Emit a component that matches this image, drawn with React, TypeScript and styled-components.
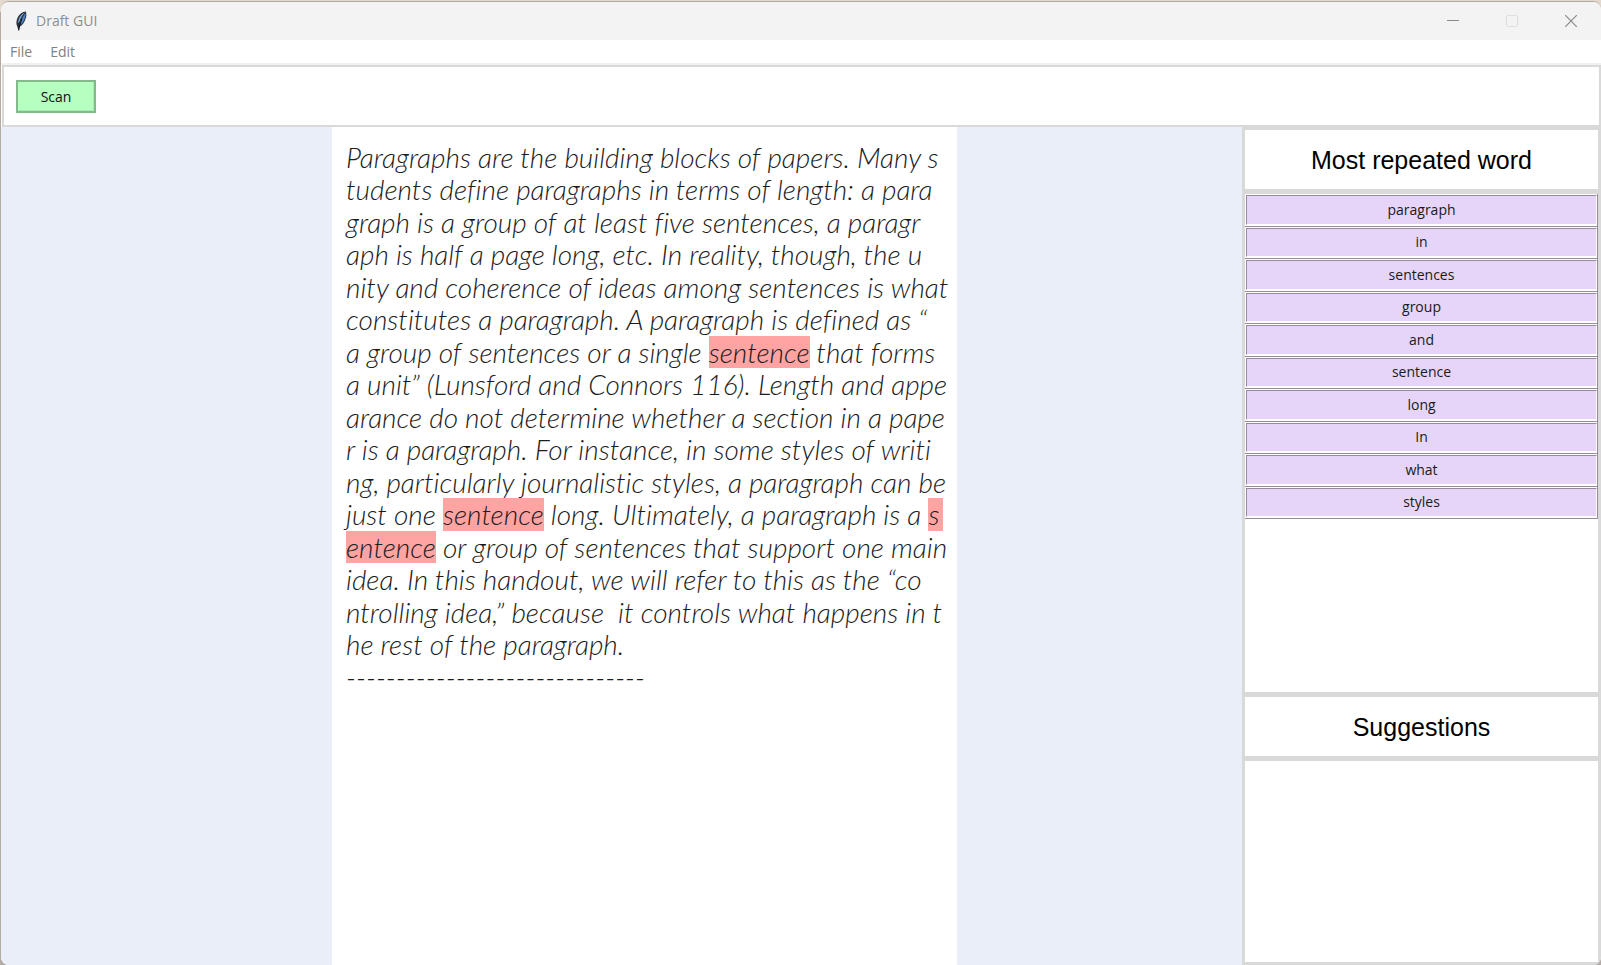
import React from "react";
import styled, { createGlobalStyle } from "styled-components";

const GlobalStyle = createGlobalStyle`
  *, *::before, *::after { box-sizing: border-box; }
  body {
    margin: 0;
    background: #b5aba5;
    font-family: "Segoe UI", "Open Sans", "Noto Sans", sans-serif;
  }
  button { font-family: inherit; cursor: pointer; }
`;

const Desktop = styled.div`
  min-height: 100vh;
  display: flex;
  padding: 1px 0 0 1px;
  background: linear-gradient(#e3d9ce 12px, #b5aba5 12px);
`;

const AppWindow = styled.div`
  flex: 1;
  display: flex;
  flex-direction: column;
  overflow: hidden;
  border-top: 1px solid #b0a9a2;
  border-radius: 8px;
  background: #ffffff;
`;

const TitleBar = styled.header`
  flex: none;
  height: 38px;
  display: flex;
  align-items: center;
  padding: 0 1px 0 13px;
  background: #f3f3f3;
`;

const Title = styled.h1`
  flex: 1;
  margin: 0 0 0 8px;
  font-size: 14px;
  font-weight: 400;
  line-height: 20px;
  color: #8e8e8e;
`;

const WindowButton = styled.button`
  width: 59px;
  height: 38px;
  display: flex;
  align-items: center;
  justify-content: center;
  padding: 0;
  border: 0;
  background: transparent;
  color: #8a8a8a;
  &:disabled { color: #dedede; cursor: default; }
`;

const MenuBar = styled.nav`
  flex: none;
  height: 25px;
  display: flex;
  gap: 2px;
  padding: 0 1px;
  border-bottom: 2px solid #f0f0f0;
`;

const MenuButton = styled.button`
  padding: 0 8px;
  border: 0;
  background: transparent;
  font-size: 14px;
  line-height: 24px;
  color: #808080;
`;

const Toolbar = styled.div`
  flex: none;
  height: 62px;
  margin-left: 1px;
  padding: 13px 12px;
  border: 2px solid #d9d9d9;
`;

const ScanButton = styled.button`
  display: block;
  width: 80px;
  height: 33px;
  padding: 0;
  border: 2px solid #84b98c;
  box-shadow: inset -1px -1px #a6ecb0;
  background: #b5ffc0;
  font-size: 14px;
  line-height: 20px;
  color: #111111;
`;

const Main = styled.main`
  flex: 1;
  display: flex;
`;

const Workspace = styled.section`
  flex: 1;
  display: grid;
  grid-template-columns: 331fr 625px 285fr;
  background: #eaeef8;
`;

const Paper = styled.article`
  grid-column: 2;
  padding: 14px;
  background: #ffffff;
  font-family: "Ink Free", Lato, sans-serif;
  font-size: 28px;
  font-weight: 300;
  font-style: italic;
  font-variant-ligatures: none;
  line-height: 1.16;
  color: #1c1c1c;
`;

const Line = styled.div`
  display: flex;
  white-space: pre;
`;

const Highlight = styled.mark<{ $fill?: boolean }>`
  flex: ${(p) => (p.$fill ? "1" : "none")};
  background: #ffa3a3;
  color: inherit;
`;

const Sidebar = styled.aside`
  width: 359px;
  display: flex;
  flex-direction: column;
  border: solid #d9d9d9;
  border-width: 0 3px 3px;
`;

const PanelHeading = styled.h2`
  flex: none;
  height: 65px;
  margin: 0;
  padding-top: 1px;
  border: solid #d9d9d9;
  border-width: 3px 0;
  font-family: "Liberation Sans", Arial, sans-serif;
  font-size: 25px;
  font-weight: 400;
  line-height: 58px;
  text-align: center;
  color: #000000;
`;

const WordPanel = styled.div`
  flex: 503;
  border: solid #d9d9d9;
  border-width: 2px 0;
`;

const SuggestionPanel = styled.div`
  flex: 203;
  border-top: 2px solid #d9d9d9;
`;

const WordList = styled.ul`
  height: 325px;
  display: grid;
  grid-auto-rows: 1fr;
  margin: 0;
  padding: 0;
  list-style: none;
`;

const WordItem = styled.li`
  display: flex;
  padding: 1px 0 1px 1px;
  border: solid #948c9c;
  border-width: 0 1px 1px 0;
`;

const WordButton = styled.button`
  flex: 1;
  padding: 0;
  border: 1px solid;
  border-color: #948c9c #ffffff #ffffff #948c9c;
  background: #e6d5f8;
  font-size: 14px;
  line-height: 20px;
  color: #1a1a1a;
`;

type Run = string | { mark: string; fill?: boolean };

const lines: Run[][] = [
  ["Paragraphs are the building blocks of papers. Many s"],
  ["tudents define paragraphs in terms of length: a para"],
  ["graph is a group of at least five sentences, a paragr"],
  ["aph is half a page long, etc. In reality, though, the u"],
  ["nity and coherence of ideas among sentences is what "],
  ["constitutes a paragraph. A paragraph is defined as “"],
  ["a group of sentences or a single ", { mark: "sentence" }, " that forms "],
  ["a unit” (Lunsford and Connors 116). Length and appe"],
  ["arance do not determine whether a section in a pape"],
  ["r is a paragraph. For instance, in some styles of writi"],
  ["ng, particularly journalistic styles, a paragraph can be "],
  ["just one ", { mark: "sentence" }, " long. Ultimately, a paragraph is a ", { mark: "s", fill: true }],
  [{ mark: "entence" }, " or group of sentences that support one main "],
  ["idea. In this handout, we will refer to this as the “co"],
  ["ntrolling idea,” because  it controls what happens in t"],
  ["he rest of the paragraph."],
  ["------------------------------"],
];

const words = ["paragraph", "in", "sentences", "group", "and", "sentence", "long", "In", "what", "styles"];

const Feather = () => (
  <svg width="14" height="22" viewBox="0 0 14 22" aria-hidden="true">
    <path d="M12 1.4C8.2 1.6 5 4.2 3.4 8 2.2 11 2 14 3.2 16.4L4.6 20.4 5.4 16.8C9.4 14.8 11.6 10.4 12.4 5.4Z" fill="#2a3440" />
    <path d="M11 2.4C7.6 4 4.8 7.2 4 13L5.4 11.8C6.2 8.2 8.2 5 11 2.4Z" fill="#8bb8e6" />
    <path d="M11.6 3.2C8.8 6.4 7 10 6 15 9.6 12.6 11.4 8.6 11.6 3.2Z" fill="#4a86cf" />
    <path d="M8 8.6C6.4 12 5.2 15.6 4.6 20.4" fill="none" stroke="#10151d" strokeWidth="1.2" />
  </svg>
);

export default function App() {
  return (
    <>
      <GlobalStyle />
      <Desktop>
        <AppWindow>
          <TitleBar>
            <Feather />
            <Title>Draft GUI</Title>
            <WindowButton aria-label="Minimize">
              <svg width="12" height="12" viewBox="0 0 12 12">
                <path d="M0 5.5H12" stroke="currentColor" />
              </svg>
            </WindowButton>
            <WindowButton aria-label="Maximize" disabled>
              <svg width="12" height="12" viewBox="0 0 12 12">
                <rect x=".5" y=".5" width="11" height="11" rx="1" fill="none" stroke="currentColor" />
              </svg>
            </WindowButton>
            <WindowButton aria-label="Close">
              <svg width="12" height="12" viewBox="0 0 12 12">
                <path d="M0 0L12 12M12 0L0 12" stroke="currentColor" strokeWidth="1.2" />
              </svg>
            </WindowButton>
          </TitleBar>
          <MenuBar>
            <MenuButton>File</MenuButton>
            <MenuButton>Edit</MenuButton>
          </MenuBar>
          <Toolbar>
            <ScanButton>Scan</ScanButton>
          </Toolbar>
          <Main>
            <Workspace>
              <Paper>
                {lines.map((runs, i) => (
                  <Line key={i}>
                    {runs.map((run, j) =>
                      typeof run === "string" ? (
                        <span key={j}>{run}</span>
                      ) : (
                        <Highlight key={j} $fill={run.fill}>{run.mark}</Highlight>
                      )
                    )}
                  </Line>
                ))}
              </Paper>
            </Workspace>
            <Sidebar>
              <PanelHeading>Most repeated word</PanelHeading>
              <WordPanel>
                <WordList>
                  {words.map((word) => (
                    <WordItem key={word}>
                      <WordButton>{word}</WordButton>
                    </WordItem>
                  ))}
                </WordList>
              </WordPanel>
              <PanelHeading>Suggestions</PanelHeading>
              <SuggestionPanel />
            </Sidebar>
          </Main>
        </AppWindow>
      </Desktop>
    </>
  );
}
